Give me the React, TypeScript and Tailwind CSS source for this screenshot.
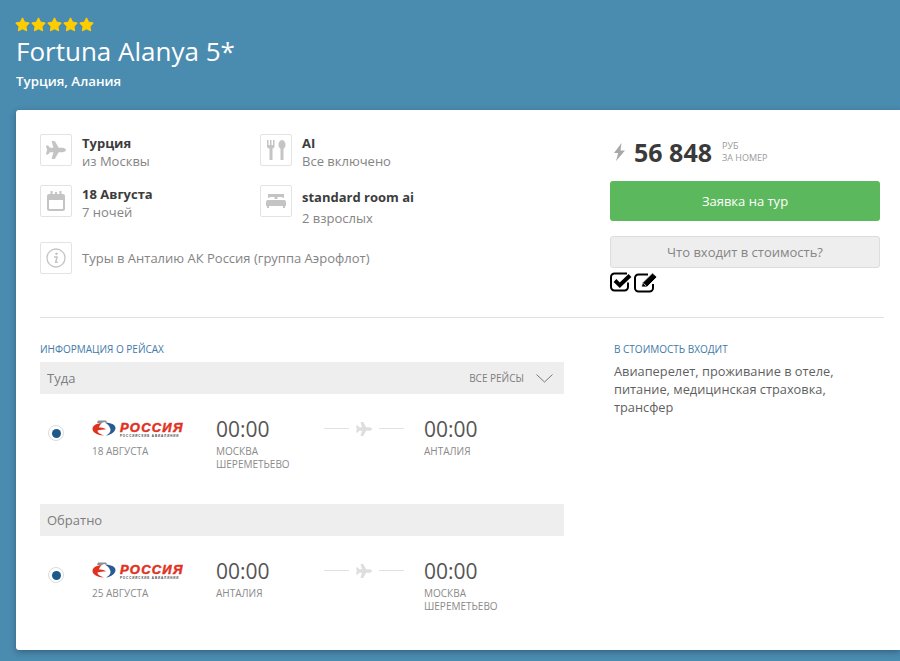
import React from "react";
import { FaPlane, FaStar } from "react-icons/fa";

function IconBox({ children }: { children: React.ReactNode }) {
  return (
    <div className="w-8 h-8 shrink-0 border border-[#e3e3e3] rounded-[2px] flex items-center justify-center text-[#c4c4c4]">
      {children}
    </div>
  );
}

function Info({ icon, title, sub, w, subGap }: { icon: React.ReactNode; title: string; sub: string; w: string; subGap?: boolean }) {
  return (
    <div className={`flex gap-[10px] ${w}`}>
      <IconBox>{icon}</IconBox>
      <div className="text-[13px] leading-[18px]">
        <div className={`font-bold text-[#3c3c3c] ${subGap ? "mt-[3px] mb-[3px]" : ""}`}>{title}</div>
        <div className="text-[#848484]">{sub}</div>
      </div>
    </div>
  );
}

function CalendarIcon() {
  return (
    <svg width="18" height="20" viewBox="0 0 18 20" fill="currentColor">
      <path d="M2 3h14a2 2 0 0 1 2 2v13a2 2 0 0 1-2 2H2a2 2 0 0 1-2-2V5a2 2 0 0 1 2-2zm0 6v9h14V9z" />
      <rect x="3.5" y="0" width="2" height="5" />
      <rect x="8" y="1" width="2" height="3" />
      <rect x="12.5" y="0" width="2" height="5" />
    </svg>
  );
}

function CutleryIcon() {
  return (
    <svg width="19" height="20" viewBox="0 0 19 20" fill="currentColor">
      <path d="M0 0h1.5v5H3V0h1.5v5H6V0h1.5v6.5c0 1.2-.8 2-2 2V20h-3V8.500c-1.700 0-2.500-.8-2.500-2z" />
      <path d="M15 0c2.200 0 3.500 2.200 3.500 4.700 0 2-1 3.500-2 4V20h-3V8.700c-1-.5-2-2-2-4C11.500 2.200 12.800 0 15 0z" />
    </svg>
  );
}

function BedIcon() {
  return (
    <svg width="20" height="14" viewBox="0 0 20 14" fill="currentColor">
      <path d="M2 0h16v4h-1.500V3h-5v2h-3V3h-5v1H2z" />
      <path d="M1 6h18l1 2v4h-1v2h-2v-2H3v2H1v-2H0V8z" />
    </svg>
  );
}

function InfoIcon() {
  return (
    <svg width="20" height="20" viewBox="0 0 20 20" fill="none" stroke="currentColor">
      <circle cx="10" cy="10" r="9" strokeWidth="1.300" />
      <circle cx="10.500" cy="5.800" r="1.300" fill="currentColor" stroke="none" />
      <path d="M8 9h3l-1.300 5.300h2" strokeWidth="1.500" />
    </svg>
  );
}

function BoltIcon() {
  return (
    <svg width="13" height="18" viewBox="0 0 13 18" fill="#a8a8a8">
      <path d="M8.500 0 1 10h4.200L3 18l9-10.500H7.500z" />
    </svg>
  );
}

function CheckBox() {
  return (
    <svg width="22" height="20" viewBox="0 0 22 20" fill="none" stroke="#000">
      <path d="M18 10.500V15a3.500 3.500 0 0 1-3.500 3.500H4.500A3.500 3.500 0 0 1 1 15V5a3.500 3.500 0 0 1 3.500-3.500H17" strokeWidth="2" />
      <path d="M5 8.500l4.800 4.800L20 3.500" strokeWidth="4" />
    </svg>
  );
}

function EditBox() {
  return (
    <svg width="25" height="21" viewBox="0 0 25 21" fill="none" stroke="#000">
      <path d="M19 12v4a3.500 3.500 0 0 1-3.500 3.500h-11A3.500 3.500 0 0 1 1 16V6a3.500 3.500 0 0 1 3.500-3.500H14" strokeWidth="2" />
      <path d="M7.500 15l.8-4L18.500 1 23 5 13 15z" fill="#000" stroke="#fff" strokeWidth="0.800" />
      <path d="M9.500 11.500l2.800 2.500" stroke="#fff" strokeWidth="0.800" />
    </svg>
  );
}

function Logo() {
  return (
    <div className="flex items-start h-[17px] gap-[3px]">
      <svg width="24" height="16" viewBox="0 0 24 16" className="shrink-0">
        <path d="M6 0.500h8l1 1.500H12L10 3H5z" fill="#8a8f96" />
        <path d="M10 3C3.500 3.500 0.500 6 0.500 9c0 3.500 5 6.500 11.500 6.500C7.500 14 5.500 12.500 5.500 10.500 8 9.500 11 9.500 14 9.500 11.500 7.500 9 7.500 7 7.500 7.500 5.500 8.500 4 10 3z" fill="#e0301e" />
        <path d="M12.500 2.500c6.500 0 11 2.300 11 5.500s-4 7-9.500 7.500c3-1.500 4.500-3.500 4.500-5.500S16.500 4 12.500 2.500z" fill="#2a5a94" />
      </svg>
      <div className="flex flex-col mt-[2px] ml-[1px]">
        <span className="text-[13px] leading-[12px] font-black italic tracking-[1.2px] text-[#e3301f] [-webkit-text-stroke:0.5px_#e3301f] [font-family:'Liberation_Sans',sans-serif]">РОССИЯ</span>
        <span className="text-[3px] leading-[4px] font-bold text-[#444] tracking-[0.9px] [font-family:'Liberation_Sans',sans-serif]">РОССИЙСКИЕ АВИАЛИНИИ</span>
      </div>
    </div>
  );
}

function Leg({ date, from, to }: { date: string; from: React.ReactNode; to: React.ReactNode }) {
  return (
    <div className="flex pt-[22px] h-[110px]">
      <div className="w-[52px] pl-2 pt-[9px]">
        <div className="w-4 h-4 rounded-full border border-[#dcdcdc] flex items-center justify-center">
          <div className="w-[9px] h-[9px] rounded-full bg-[#1d5a8c]" />
        </div>
      </div>
      <div className="w-[124px] pt-[4px]">
        <Logo />
        <div className="text-[10px] leading-[14px] text-[#8a8a8a] mt-[7px]">{date}</div>
      </div>
      <div className="w-[108px]">
        <div className="text-[21px] leading-[26px] text-[#555555]">00:00</div>
        <div className="text-[10px] leading-[13px] text-[#8a8a8a] mt-[3px]">{from}</div>
      </div>
      <div className="w-[100px] flex items-start gap-[7px] pt-[5px] text-[#dedede]">
        <div className="w-[25px] h-px bg-[#e2e2e2] mt-[7px]" />
        <FaPlane size={16} className="shrink-0" />
        <div className="w-[25px] h-px bg-[#e2e2e2] mt-[7px]" />
      </div>
      <div>
        <div className="text-[21px] leading-[26px] text-[#555555]">00:00</div>
        <div className="text-[10px] leading-[13px] text-[#8a8a8a] mt-[3px]">{to}</div>
      </div>
    </div>
  );
}

export default function App() {
  return (
    <div className="h-[661px] overflow-hidden bg-[#4a8bb0] pl-4 pt-[17px] [font-family:'Open_Sans',sans-serif]">
      <div className="flex gap-[1px] text-[#ffcc00] -ml-px">
        {[0, 1, 2, 3, 4].map((i) => (
          <FaStar key={i} size={15} />
        ))}
      </div>
      <h1 className="text-[26px] leading-[34px] text-white mt-[2px]">Fortuna Alanya 5*</h1>
      <div className="text-[13.300px] leading-[18px] font-semibold text-white mt-[4px]">Турция, Алания</div>

      <div className="mt-[20px] h-[540px] bg-white rounded-l-[3px] shadow-[0_2px_6px_rgba(0,0,0,0.3)] pl-6 pr-4 pt-6">
        <div className="flex h-[184px] border-b border-[#e2e2e2]">
          <div className="w-[570px]">
            <div className="flex">
              <Info w="w-[220px]" icon={<FaPlane size={20} />} title="Турция" sub="из Москвы" />
              <Info w="w-[220px]" icon={<CutleryIcon />} title="AI" sub="Все включено" />
            </div>
            <div className="flex mt-[15px]">
              <Info w="w-[220px]" icon={<CalendarIcon />} title="18 Августа" sub="7 ночей" />
              <Info w="w-[220px]" subGap icon={<BedIcon />} title="standard room ai" sub="2 взрослых" />
            </div>
            <div className="flex items-center gap-[10px] mt-[15px]">
              <IconBox><InfoIcon /></IconBox>
              <span className="text-[13px] text-[#848484] pt-[2px]">Туры в Анталию АК Россия (группа Аэрофлот)</span>
            </div>
          </div>
          <div className="w-[270px]">
            <div className="flex items-center h-[35px]">
              <div className="ml-[3px]"><BoltIcon /></div>
              <span className="ml-[8px] text-[25px] leading-[34px] font-bold text-[#3a3a3a]">56 848</span>
              <div className="ml-[10px] text-[9px] leading-[12px] text-[#9a9a9a]">
                <div>РУБ</div>
                <div>ЗА НОМЕР</div>
              </div>
            </div>
            <div className="mt-[12px] h-10 pt-[2px] bg-[#5cb85c] rounded-[3px] flex items-center justify-center text-[13px] font-medium text-white">
              Заявка на тур
            </div>
            <div className="mt-[15px] h-8 pt-[2px] bg-[#eeeeee] border border-[#dddddd] rounded-[3px] flex items-center justify-center text-[13px] text-[#858585]">
              Что входит в стоимость?
            </div>
            <div className="flex items-start mt-[4px] gap-[2px]">
              <CheckBox />
              <EditBox />
            </div>
          </div>
        </div>

        <div className="flex pt-[25px]">
          <div className="w-[524px]">
            <div className="text-[10px] leading-[13px] text-[#3f7aa8]">ИНФОРМАЦИЯ О РЕЙСАХ</div>
            <div className="mt-[6px] h-8 bg-[#eeeeee] flex items-center justify-between pl-[7px] pr-[11px]">
              <span className="text-[13px] text-[#7d7d7d] pt-[2px]">Туда</span>
              <div className="flex items-center gap-[12px]">
                <span className="text-[10px] text-[#7d7d7d]">ВСЕ РЕЙСЫ</span>
                <svg width="17" height="9" viewBox="0 0 17 9" fill="none" stroke="#777" strokeWidth="1">
                  <path d="M0.5 0.5 8.5 8 16.5 0.5" />
                </svg>
              </div>
            </div>
            <Leg date="18 АВГУСТА" from={<>МОСКВА<br />ШЕРЕМЕТЬЕВО</>} to="АНТАЛИЯ" />
            <div className="h-8 bg-[#eeeeee] flex items-center pl-[7px]">
              <span className="text-[13px] text-[#7d7d7d] pt-[2px]">Обратно</span>
            </div>
            <Leg date="25 АВГУСТА" from="АНТАЛИЯ" to={<>МОСКВА<br />ШЕРЕМЕТЬЕВО</>} />
          </div>
          <div className="ml-[50px] w-[240px]">
            <div className="text-[10px] leading-[13px] text-[#3f7aa8]">В СТОИМОСТЬ ВХОДИТ</div>
            <div className="mt-[6px] text-[12.800px] leading-[18px] text-[#5f5f5f]">
              Авиаперелет, проживание в отеле, питание, медицинская страховка, трансфер
            </div>
          </div>
        </div>
      </div>
    </div>
  );
}
